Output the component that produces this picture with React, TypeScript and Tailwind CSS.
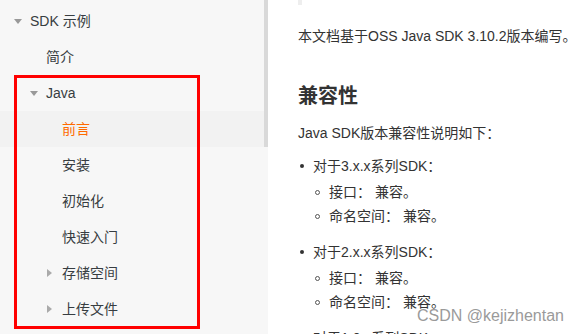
import React from "react";

type NavItem = {
  label: string;
  depth: number;
  arrow?: "down" | "right";
  active?: boolean;
};

const NAV: NavItem[] = [
  { label: "SDK 示例", depth: 0, arrow: "down" },
  { label: "简介", depth: 1 },
  { label: "Java", depth: 1, arrow: "down" },
  { label: "前言", depth: 2, active: true },
  { label: "安装", depth: 2 },
  { label: "初始化", depth: 2 },
  { label: "快速入门", depth: 2 },
  { label: "存储空间", depth: 2, arrow: "right" },
  { label: "上传文件", depth: 2, arrow: "right" },
];

const PAD = ["pl-[14px]", "pl-[30px]", "pl-[46px]"];

function Arrow({ dir }: { dir?: "down" | "right" }) {
  return (
    <span className="flex w-[16px] items-center">
      {dir === "down" && (
        <svg width="8" height="5" viewBox="0 0 8 5">
          <path d="M0 0h8L4 5z" fill="#999" />
        </svg>
      )}
      {dir === "right" && (
        <svg width="5" height="8" viewBox="0 0 5 8" className="ml-[1px]">
          <path d="M0 0v8l5-4z" fill="#aaa" />
        </svg>
      )}
    </span>
  );
}

function Sidebar() {
  return (
    <aside className="relative flex h-[334px] w-[268px] shrink-0 bg-[#f7f7f7]">
      <ul className="w-[264px] pt-[3px]">
        {NAV.map((n) => (
          <li
            key={n.label}
            className={`flex h-[36px] items-center whitespace-nowrap text-[14px] ${PAD[n.depth]} ${
              n.active ? "bg-[#f2f2f2] text-[#ff6a00]" : "text-[#373d41]"
            }`}
          >
            <Arrow dir={n.arrow} />
            {n.label}
          </li>
        ))}
      </ul>
      <div className="w-[4px]">
        <div className="h-[147px] bg-[#d9d9d9]" />
      </div>
      <div className="pointer-events-none absolute left-[14px] top-[75px] h-[254px] w-[186px] border-[3px] border-[#ff0000]" />
    </aside>
  );
}

function Sub({ children }: { children: React.ReactNode }) {
  return (
    <li className="flex h-[24px] items-center">
      <span className="mr-[9px] ml-[17px] h-[5px] w-[5px] rounded-full border border-[#555]" />
      {children}
    </li>
  );
}

function Group({ title }: { title: string }) {
  return (
    <li className="mb-[12px]">
      <div className="flex h-[24px] items-center">
        <span className="mr-[9px] ml-[2px] h-[4px] w-[4px] rounded-full bg-[#333]" />
        {title}
      </div>
      <ul className="mt-[2px]">
        <Sub>接口： 兼容。</Sub>
        <Sub>命名空间： 兼容。</Sub>
      </ul>
    </li>
  );
}

export default function App() {
  return (
    <div
      className="flex h-[334px] w-[576px] overflow-hidden bg-white text-[#333]"
      style={{ fontFamily: '"Liberation Sans", "Noto Sans CJK SC", sans-serif' }}
    >
      <Sidebar />
      <main className="relative flex-1 whitespace-nowrap pl-[30px] text-[14px]">
        <div className="h-[5px] w-[4px] bg-[#eeeeee]" />
        <p className="mt-[21px] leading-[20px]">本文档基于OSS Java SDK 3.10.2版本编写。</p>
        <h2 className="mt-[36px] text-[20px] font-bold leading-[28px] text-[#333]">兼容性</h2>
        <p className="mt-[13px] leading-[20px]">Java SDK版本兼容性说明如下：</p>
        <ul className="mt-[11px]">
          <Group title="对于3.x.x系列SDK：" />
          <Group title="对于2.x.x系列SDK：" />
          <li className="flex h-[24px] items-center">
            <span className="mr-[9px] ml-[2px] h-[4px] w-[4px] rounded-full bg-[#333]" />
            对于1.0.x系列SDK：
          </li>
        </ul>
        <div className="absolute left-[149px] top-[306px] text-[16px] leading-[20px] text-[#9a9a9a]">
          CSDN @kejizhentan
        </div>
      </main>
    </div>
  );
}
